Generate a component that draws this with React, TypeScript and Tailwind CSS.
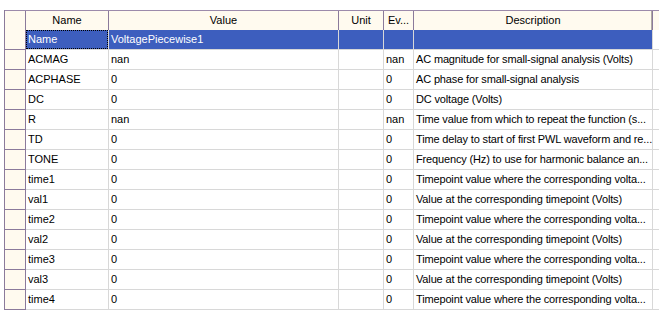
import React from "react";

type Row = { name: string; value: string; unit: string; ev: string; desc: string };

const ROWS: Row[] = [
  { name: "Name", value: "VoltagePiecewise1", unit: "", ev: "", desc: "" },
  { name: "ACMAG", value: "nan", unit: "", ev: "nan", desc: "AC magnitude for small-signal analysis (Volts)" },
  { name: "ACPHASE", value: "0", unit: "", ev: "0", desc: "AC phase for small-signal analysis" },
  { name: "DC", value: "0", unit: "", ev: "0", desc: "DC voltage (Volts)" },
  { name: "R", value: "nan", unit: "", ev: "nan", desc: "Time value from which to repeat the function (s..." },
  { name: "TD", value: "0", unit: "", ev: "0", desc: "Time delay to start of first PWL waveform and re..." },
  { name: "TONE", value: "0", unit: "", ev: "0", desc: "Frequency (Hz) to use for harmonic balance an..." },
  { name: "time1", value: "0", unit: "", ev: "0", desc: "Timepoint value where the corresponding volta..." },
  { name: "val1", value: "0", unit: "", ev: "0", desc: "Value at the corresponding timepoint (Volts)" },
  { name: "time2", value: "0", unit: "", ev: "0", desc: "Timepoint value where the corresponding volta..." },
  { name: "val2", value: "0", unit: "", ev: "0", desc: "Value at the corresponding timepoint (Volts)" },
  { name: "time3", value: "0", unit: "", ev: "0", desc: "Timepoint value where the corresponding volta..." },
  { name: "val3", value: "0", unit: "", ev: "0", desc: "Value at the corresponding timepoint (Volts)" },
  { name: "time4", value: "0", unit: "", ev: "0", desc: "Timepoint value where the corresponding volta..." },
];

export default function App() {
  return (
    <div className="w-[659px] h-[310px] overflow-hidden bg-white pt-[10px] font-['Liberation_Sans',Arial,sans-serif] text-[11px] text-black">
      <div className="ml-[4px] border-l border-[#8b7a9b]">
        {/* Header */}
        <div className="flex h-[20px] border-t border-[#9c8aab] bg-[#fffaef]">
          <div className="w-[21px] shrink-0 border-r border-[#8b7a9b]" />
          <div className="w-[83px] shrink-0 border-r border-[#8b7a9b] flex items-center justify-center">Name</div>
          <div className="w-[230px] shrink-0 border-r border-[#8b7a9b] flex items-center justify-center">Value</div>
          <div className="w-[45px] shrink-0 border-r border-[#8b7a9b] flex items-center justify-center">Unit</div>
          <div className="w-[30px] shrink-0 border-r border-[#8b7a9b] flex items-center justify-center">Ev...</div>
          <div className="w-[239px] shrink-0 border-r border-[#8b7a9b] shadow-[inset_-1px_0_0_#b0aaa4] flex items-center justify-center">Description</div>
          <div className="flex-1" />
        </div>

        {/* Body */}
        {ROWS.map((r, i) => {
          const sel = i === 0;
          const cell = sel ? "bg-[#3d5ebe] text-white" : "bg-white";
          return (
            <div key={r.name} className="flex h-[20px]">
              <div className="w-[21px] shrink-0 border-r border-b border-[#8b7a9b] bg-[#fffaef]" />
              <div className={`w-[83px] shrink-0 border-r border-b border-[#d8d8d8] ${cell}`}>
                {sel ? (
                  <div className="h-full pl-[1px] flex items-center border border-dotted border-[#e0e0e0] outline outline-1 outline-dotted outline-black -outline-offset-1">
                    {r.name}
                  </div>
                ) : (
                  <div className="h-full pl-[2px] flex items-center whitespace-nowrap overflow-hidden">{r.name}</div>
                )}
              </div>
              <div className={`w-[230px] shrink-0 border-r border-b border-[#d8d8d8] pl-[2px] flex items-center whitespace-nowrap overflow-hidden ${cell}`}>{r.value}</div>
              <div className={`w-[45px] shrink-0 border-r border-b border-[#d8d8d8] pl-[2px] flex items-center ${cell}`}>{r.unit}</div>
              <div className={`w-[30px] shrink-0 border-r border-b border-[#d8d8d8] pl-[2px] flex items-center whitespace-nowrap overflow-hidden ${cell}`}>{r.ev}</div>
              <div className={`w-[239px] shrink-0 border-r border-b border-[#d8d8d8] pl-[2px] flex items-center whitespace-nowrap overflow-hidden tracking-[-0.15px] ${cell}`}>{r.desc}</div>
              <div className="flex-1 border-b border-[#d8d8d8]" />
            </div>
          );
        })}
      </div>
    </div>
  );
}
